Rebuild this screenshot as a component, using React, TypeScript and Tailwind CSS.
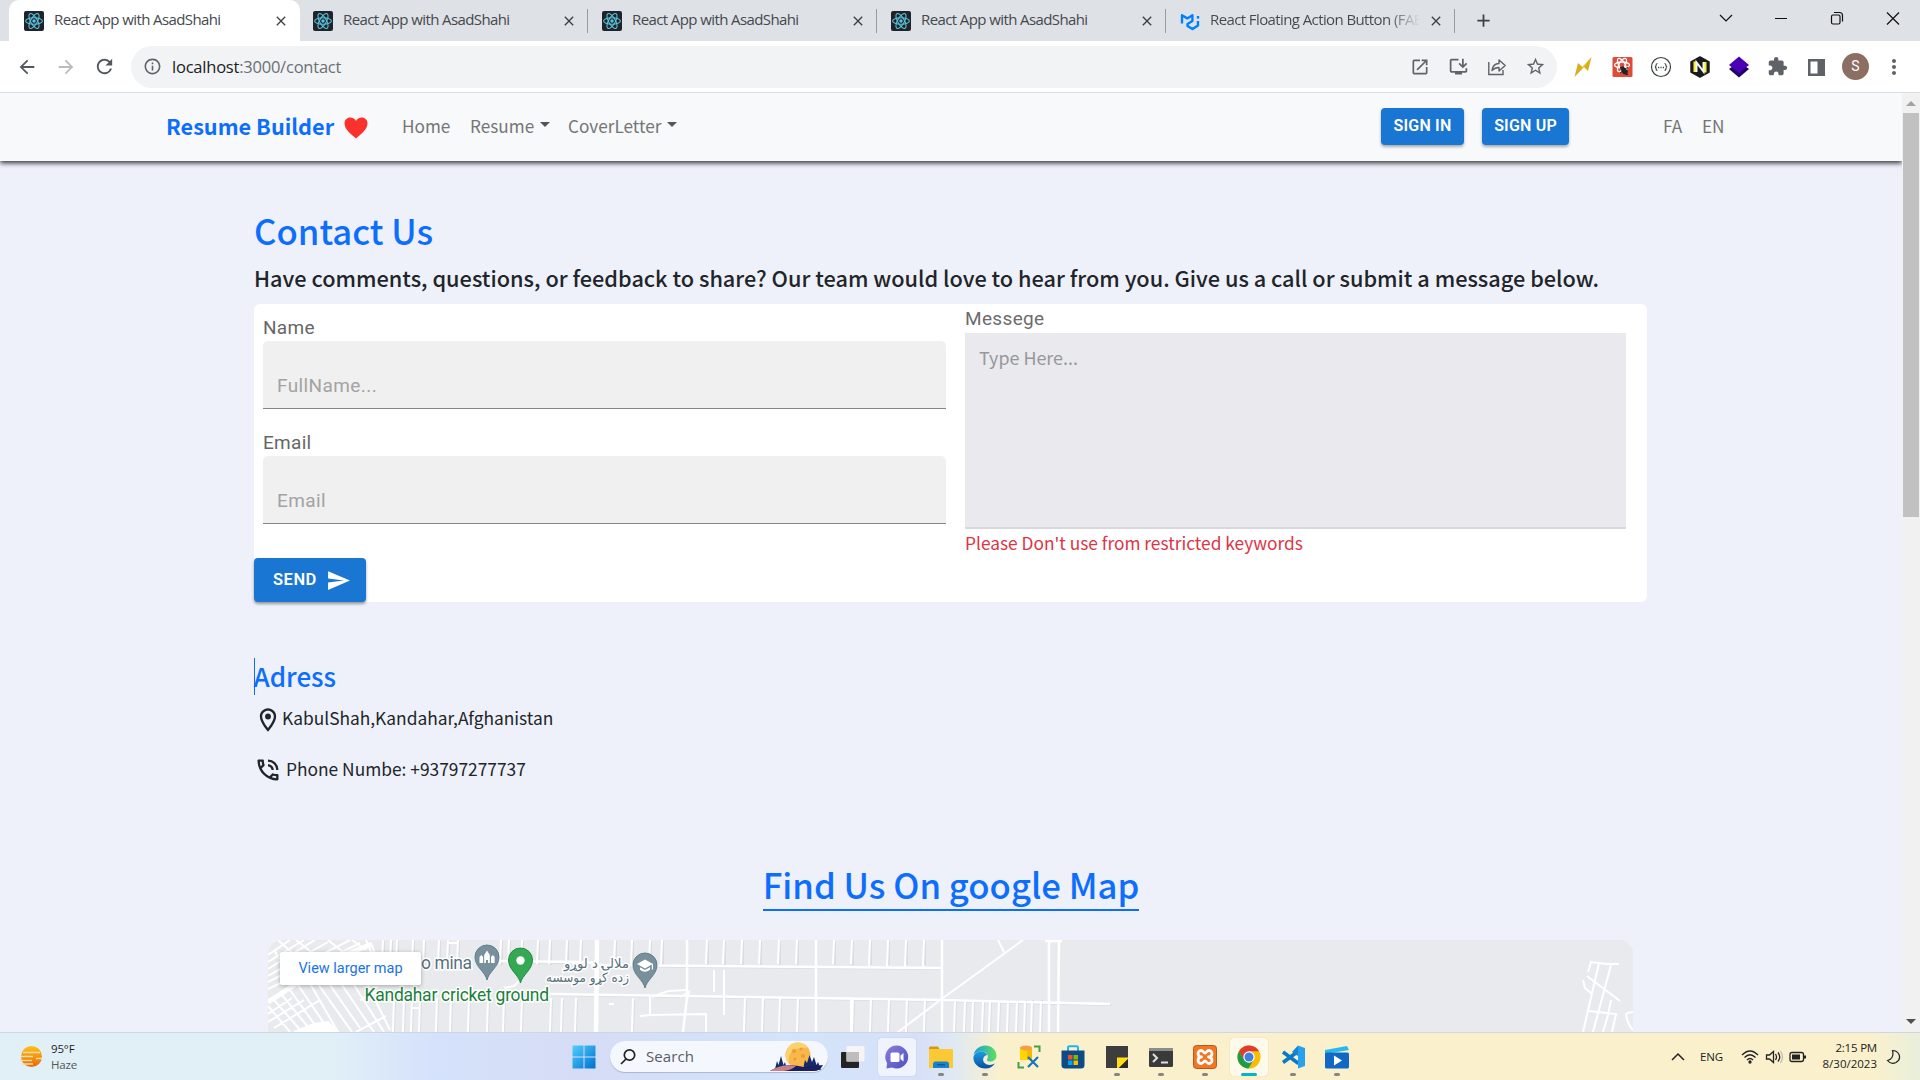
import React from "react";
import {
  MdArrowBack,
  MdArrowForward,
  MdRefresh,
  MdInfoOutline,
  MdOpenInNew,
  MdInstallDesktop,
  MdStarBorder,
  MdExtension,
  MdMoreVert,
  MdClose,
  MdAdd,
  MdSend,
  MdOutlineLocationOn,
  MdOutlinePhoneInTalk,
} from "react-icons/md";

const ui = "font-['Open_Sans','Noto_Sans',sans-serif]";
const page = "font-['Noto_Sans_CJK_SC',sans-serif]";
const roboto = "font-['Roboto',sans-serif]";

function ReactFavicon() {
  return (
    <svg width="20" height="20" viewBox="0 0 20 20" className="shrink-0">
      <rect width="20" height="20" rx="2" fill="#20232a" />
      <g fill="none" stroke="#58c4dc" strokeWidth="1.1">
        <ellipse cx="10" cy="10" rx="8.4" ry="3.3" />
        <ellipse cx="10" cy="10" rx="8.4" ry="3.3" transform="rotate(60 10 10)" />
        <ellipse cx="10" cy="10" rx="8.4" ry="3.3" transform="rotate(120 10 10)" />
      </g>
      <circle cx="10" cy="10" r="1.7" fill="#58c4dc" />
    </svg>
  );
}

function MuiFavicon() {
  return (
    <svg width="20" height="20" viewBox="0 0 20 20" className="shrink-0">
      <g fill="none" strokeWidth="2.4" strokeLinejoin="round">
        <path d="M2 12.5V4.2L7.3 7.4 12.4 4.2V10L7.5 13V15L12.5 18L18 14.5V10" stroke="#007fff" />
        <path d="M18 7.6V5" stroke="#007fff" />
      </g>
    </svg>
  );
}

function Tab({ title, active, mui }: { title: string; active?: boolean; mui?: boolean }) {
  return (
    <div className="flex h-[41px] w-[289px] shrink-0 items-center">
      <div
        className={
          active
            ? "-ml-px flex h-[41px] w-[291px] shrink-0 items-center rounded-t-[10px] bg-white pl-[15px]"
            : "flex h-[41px] w-[289px] items-center pl-[14px]"
        }
      >
        {mui ? <MuiFavicon /> : <ReactFavicon />}
        <div
          className={
            mui
              ? "-mt-[3px] ml-[10px] w-[211px] overflow-hidden whitespace-nowrap bg-linear-to-r from-[#45494d] from-85% to-transparent bg-clip-text text-[15px] leading-5 tracking-[-0.6px] text-transparent"
              : "-mt-[3px] ml-[10px] w-[211px] overflow-hidden whitespace-nowrap text-[15px] leading-5 tracking-[-0.6px] text-[#45494d]"
          }
        >
          {title}
        </div>
        <MdClose className="ml-[8px] size-4 shrink-0 text-[#3c4043]" />
        {!active && <div className="ml-[10px] h-6 w-px shrink-0 bg-[#989ca1]" />}
      </div>
    </div>
  );
}

function TabStrip() {
  return (
    <div className="flex h-[41px] bg-[#dee1e6] pl-[10px]">
      <Tab title="React App with AsadShahi" active />
      <Tab title="React App with AsadShahi" />
      <Tab title="React App with AsadShahi" />
      <Tab title="React App with AsadShahi" />
      <Tab title="React Floating Action Button (FAB)" mui />
      <div className="flex flex-1 items-center pl-[18px]">
        <MdAdd className="size-[21px] text-[#3c4043]" />
      </div>
      <svg width="200" height="36" viewBox="1712 0 200 36" fill="none" stroke="#111" strokeWidth="1.2" className="mr-2">
        <path d="M1720 15l6 6 6-6M1775 18.5h12M1887 12.5l12 12M1899 12.5l-12 12" />
        <rect x="1831.500" y="15" width="8.500" height="9" rx="1.500" />
        <path d="M1834 12.500h5.500a3 3 0 0 1 3 3v6" />
      </svg>
    </div>
  );
}

function ShareIcon() {
  return (
    <svg width="20" height="20" viewBox="0 0 20 20" fill="none" stroke="#5f6368" strokeWidth="1.400">
      <path d="M1.800 5v12.500H16V13" />
      <path d="M5 13.500C5.500 9 8 6.600 12 6.500V3l6.200 5.500L12 14v-3.500C9 10.500 7 11.300 5 13.500z" strokeLinejoin="round" />
    </svg>
  );
}

function Toolbar() {
  return (
    <div className="flex h-[52px] items-center border-b border-[#d9dce0] bg-white">
      <MdArrowBack className="ml-4 size-[22px] text-[#54585d]" />
      <MdArrowForward className="ml-[17px] size-[22px] text-[#babcbe]" />
      <MdRefresh className="ml-[16px] size-[23px] text-[#54585d]" />
      <div className="ml-[15px] flex h-[42px] w-[1426px] items-center rounded-full bg-[#f1f3f4]">
        <MdInfoOutline className="ml-[12px] size-[19px] text-[#5f6368]" />
        <div className="ml-[10px] w-[900px] whitespace-nowrap text-[16.5px] leading-6 tracking-[-0.22px] text-[#6b6f74]">
          <span className="text-[#202124]">localhost</span>:3000/contact
        </div>
        <div className="flex flex-1 items-center justify-end gap-[18px] pr-[11px] text-[#5f6368]">
          <MdOpenInNew className="size-5" />
          <MdInstallDesktop className="size-[21px]" />
          <ShareIcon />
          <MdStarBorder className="size-[21px]" />
        </div>
      </div>
      <div className="ml-[15px] flex items-center gap-[17px]">
        <svg width="22" height="22" viewBox="0 0 22 22">
          <path d="M19.500 1L16 15L12 11L2.500 21L6 7L10.500 11z" fill="#d8ad1e" />
          <path d="M19.500 1L13 9.500L11 12L6 7L10.500 11z" fill="#f2d02c" />
        </svg>
        <svg width="22" height="22" viewBox="0 0 22 22">
          <rect x="1.500" y="1" width="20" height="20" rx="1.500" fill="#dd4b39" />
          <g fill="none" stroke="#fff" strokeWidth="1.300">
            <ellipse cx="11" cy="9" rx="7.500" ry="3" />
            <ellipse cx="11" cy="9" rx="7.500" ry="3" transform="rotate(60 11 9)" />
            <ellipse cx="11" cy="9" rx="7.500" ry="3" transform="rotate(120 11 9)" />
          </g>
          <path d="M9 12l3-2 5 5-1 4-4-1z" fill="#222" />
          <path d="M9 11l8 8M17 11l-8 6" stroke="#222" />
        </svg>
        <svg width="22" height="22" viewBox="0 0 22 22" fill="none" stroke="#3c4043">
          <circle cx="11" cy="11" r="9.500" strokeWidth="1.200" />
          <path d="M7.500 7.500c-1.500 0-1.500 1-1.500 2s-.3 1.500-1.200 1.500c.9 0 1.200.5 1.200 1.500s0 2 1.500 2M14.500 7.500c1.500 0 1.500 1 1.500 2s.3 1.500 1.200 1.500c-.9 0-1.200.5-1.200 1.500s0 2-1.500 2" strokeWidth="1.200" />
          <path d="M8 11.500h6" strokeDasharray="1.200 1.200" strokeWidth="1.300" />
        </svg>
        <svg width="22" height="22" viewBox="0 0 22 22">
          <path d="M11 1l9 5v10l-9 5-9-5V6z" fill="#1b1b1b" stroke="#1b1b1b" strokeWidth="1.500" strokeLinejoin="round" />
          <path d="M6 5.500v10.500M16 6v10.500" stroke="#f7ef2b" strokeWidth="3" />
          <path d="M7.500 16V6.500l7 9V6" fill="none" stroke="#f5f5f5" strokeWidth="2" />
        </svg>
        <svg width="22" height="22" viewBox="0 0 22 22">
          <path d="M1 13l10-7 10 7-10 8.500z" fill="#22006e" />
          <path d="M1 9l10-8.500L21 9l-10 8z" fill="#4b00b5" />
        </svg>
        <MdExtension className="size-[21px] text-[#5f6368]" />
        <svg width="22" height="22" viewBox="0 0 22 22">
          <path d="M3 3h17v17H3z M5.500 5.500v12h7v-12z" fillRule="evenodd" fill="#5f6368" />
        </svg>
        <div className={`-ml-[2px] flex size-[27px] items-center justify-center rounded-full bg-[#8d6e63] text-[14px] text-white ${roboto}`}>S</div>
        <MdMoreVert className="-ml-[4px] size-[24px] text-[#5f6368]" />
      </div>
    </div>
  );
}

function Caret() {
  return <span className="ml-[6px] mb-[3px] inline-block border-x-[5px] border-t-[5px] border-x-transparent border-t-[#555]" />;
}

function Navbar() {
  return (
    <div className="relative z-10 flex h-[68px] items-center bg-[#f8f9fa] pb-[2px] pl-[166px] text-[17.2px] text-[#747576] shadow-[0_2px_5px_#000000d0]">
      <span className="w-[178px] whitespace-nowrap text-[21.7px] font-bold text-[#0d6efd]">Resume Builder</span>
      <svg width="24" height="22" viewBox="0 0 24 22" className="mt-[3px] shrink-0">
        <path d="M12 21.500C8 18 .5 12.500.5 6.500.5 3 3 .5 6.200.5 8.700.5 11 1.800 12 4c1-2.200 3.300-3.500 5.800-3.500C21 .5 23.500 3 23.500 6.500 23.500 12.500 16 18 12 21.500z" fill="#fa312c" />
      </svg>
      <span className="ml-[34px] w-[68px]">Home</span>
      <span className="flex w-[98px] items-center">Resume<Caret /></span>
      <span className="flex w-[813px] items-center">CoverLetter<Caret /></span>
      <button className={`h-[37px] w-[83px] rounded-[4px] bg-[#1976d2] text-[16px] font-semibold tracking-[0.2px] text-white shadow-[0_2px_3px_#00000050] ${roboto}`}>SIGN IN</button>
      <button className={`ml-[18px] h-[37px] w-[87px] rounded-[4px] bg-[#1976d2] text-[16px] font-semibold tracking-[0.2px] text-white shadow-[0_2px_3px_#00000050] ${roboto}`}>SIGN UP</button>
      <span className="ml-[94px] w-[39px]">FA</span>
      <span>EN</span>
    </div>
  );
}

function Field({ label, placeholder }: { label: string; placeholder: string }) {
  return (
    <div className={`h-[115px] ${roboto}`}>
      <div className="h-[25px] text-[19px] leading-[23px] tracking-[0.3px] text-[#666]">{label}</div>
      <div className="h-[68px] rounded-t-[5px] border-b border-[#868686] bg-[#f0f0f0] pl-[14px] pt-[31px] text-[19px] leading-[27px] tracking-[0.4px] text-[#a3a3a3]">
        {placeholder}
      </div>
    </div>
  );
}

function ContactForm() {
  return (
    <div className="flex h-[298px] w-[1393px] rounded-[6px] bg-white">
      <div className="w-[711px]">
        <div className="ml-[9px] h-[254px] w-[683px] pt-[12px]">
          <Field label="Name" placeholder="FullName..." />
          <Field label="Email" placeholder="Email" />
        </div>
        <button className={`flex h-[44px] w-[112px] items-center rounded-[4px] bg-[#1976d2] pl-[19px] text-[16.500px] font-semibold tracking-[0.5px] text-white shadow-[0_2px_3px_#00000060] ${roboto}`}>
          SEND
          <MdSend className="ml-[9px] size-[25px]" />
        </button>
      </div>
      <div className="w-[661px]">
        <div className={`h-[29px] text-[19px] leading-[29px] tracking-[0.35px] text-[#6c6c6c] ${roboto}`}>Messege</div>
        <div className="h-[196px] border-b-2 border-[#d8d7de] bg-[#eae9ee] pl-[14px] pt-[11px] text-[17.900px] leading-[27px] text-[#97979b]">
          Type Here...
        </div>
        <div className="text-[17.320px] leading-[28px] text-[#dc3545]">Please Don't use from restricted keywords</div>
      </div>
    </div>
  );
}

const upperStreets = [115, 123, 129, 145, 156, 171, 180, 190, 233, 241, 254, 270, 282, 299, 313, 347, 364, 382, 394, 439, 456, 474, 492, 511, 529, 566, 584, 602, 620, 638, 656];
const lowerStreets = [125, 135, 143, 151, 168, 182, 200, 219, 235, 253, 282, 293, 307, 364, 476, 494, 511, 529, 584, 602, 620, 638, 656, 686, 696, 704, 714, 721, 730, 739, 748, 756, 763, 772];

function Pin({ x, y, fill, stroke, kind }: { x: number; y: number; fill: string; stroke: string; kind: string }) {
  return (
    <g transform={`translate(${x} ${y})`}>
      <path d="M0 35C-1.500 27-12 22-12 12A12 12 0 0 1 12 12C12 22 1.500 27 0 35z" fill={fill} stroke={stroke} />
      {kind === "dot" && <circle cx="0" cy="12.500" r="4.200" fill="#fff" />}
      {kind === "mosque" && <path d="M-7.500 18v-6l1.800-2 1.800 2v6zM-2.800 18v-8L0 5.500 2.800 10v8H1v-3h-2v3zM4 18v-6l1.800-2 1.800 2v6z" fill="#fff" />}
      {kind === "school" && <path d="M-8 11L0 6.500 8 11v5.500H6.800v-5L0 15.500zM-5 14.200L0 17l5-2.800v2.500Q0 21-5 16.700z" fill="#fff" />}
    </g>
  );
}

function MapView() {
  return (
    <div className="relative ml-[268px] h-[140px] w-[1365px] overflow-hidden rounded-t-[14px] bg-[#e8eaed]">
      <svg width="1365" height="92" viewBox="0 0 1365 92" className="block">
        <g transform="translate(1 1)" fill="none" stroke="#dadce0" strokeWidth="2">
          {upperStreets.map((x) => <path key={x} d={`M${x} 0V24`} />)}
          {lowerStreets.map((x) => <path key={x} d={`M${x + 1} 59L${x} 92`} />)}
          <path d="M225 21L320 22L328 25L674 28M282 54L674 60L775 62.500L842 64" />
        </g>
        <g fill="none" stroke="#fff" strokeWidth="2">
          {upperStreets.map((x) => <path key={x} d={`M${x} 0L${x - 1} ${x > 600 ? 27 : 24}`} />)}
          {lowerStreets.map((x) => <path key={x} d={`M${x + 1} ${x > 680 ? 62 : 58}L${x} 92`} />)}
          <path d="M225 21L320 22L328 25L674 28M282 54L674 60L775 62.500L842 64M419 0V57L415 92M548 0V92M674 0V92M781 0V92M791 0L790 92M777 1h17" strokeWidth="2.500" />
          <path d="M755 0L675 58L630 92M730 0L736 12M372 76L382 75V57M382 75L438 74V92M412 57L421 52L419 60M446 30V52M456 75V30M341 64h5M384 57L400 51L419 50M583 60V92" />
          <path d="M329 0L328 92" strokeWidth="4.500" />
          <path d="M1320 32L1323 22L1339 24L1351 24M1331 23L1315 92M1343 25L1325 92M1319 36L1352 61M1315 40L1317 48L1324 54M1321 71L1348 74L1344 92M1343 60L1340 75L1335 92M1359 73L1365 72M1358 73Q1359 84 1365 90" />
        </g>
        <g fill="none" stroke="#fff" strokeWidth="2">
          <path d="M0 62L28 44L60 22L104 4" strokeWidth="5" />
          <path d="M0 15L22 0M0 22L36 0M0 29L47 0M0 36L60 2M0 42L82 0M0 49L92 3M10 0L40 27M28 0L56 22M60 0L80 16M6 10L22 36M98 0L104 14L86 20M84 0L98 10M104 5L110 24" />
          <path d="M0 66L22 92M6 60L34 92M14 55L44 92M22 50L52 92M30 45L62 92M40 40L70 92M50 44L84 92M62 45L92 88M74 45L106 92M86 45L116 92M100 45L122 90M0 74L24 58M0 82L36 60M6 88L52 60M88 92L118 76M92 60L108 52" />
          <path d="M26 92L46 84L60 82L70 92z" fill="#fff" />
          <path d="M143 68h9M180 3h9M236 48L246 46L252 40" />
        </g>
        <Pin x={219} y={5} fill="#78909c" stroke="#607d8b" kind="mosque" />
        <Pin x={252.500} y={8} fill="#34a853" stroke="#1e8e3e" kind="dot" />
        <Pin x={377} y={13} fill="#78909c" stroke="#607d8b" kind="school" />
        <g fontFamily="Roboto" stroke="#fff" strokeWidth="3" style={{ paintOrder: "stroke" }}>
          <text x="153" y="28.500" fontSize="17.500" textLength="51" fill="#58707c">o mina</text>
          <text x="96.500" y="61" fontSize="17.500" textLength="184.500" fill="#188038">Kandahar cricket ground</text>
          <g fontFamily="'DejaVu Sans', sans-serif" fontSize="13" fill="#58707c" direction="rtl">
            <text x="361" y="28" textLength="65" lengthAdjust="spacingAndGlyphs">ملالۍ د لوړو</text>
            <text x="361" y="42" textLength="83" lengthAdjust="spacingAndGlyphs">زده کړو موسسه</text>
          </g>
        </g>
      </svg>
      <div className={`absolute left-[12px] top-[12px] flex h-[33px] w-[141px] items-center justify-center rounded-[2px] bg-white text-[14.500px] text-[#1a73e8] shadow-[0_1px_4px_#0000004d] ${roboto}`}>
        View larger map
      </div>
    </div>
  );
}

function ContactPage() {
  return (
    <div className={`h-[939px] w-[1902px] overflow-hidden bg-[#eef1fa] ${page}`}>
      <Navbar />
      <div className="pl-[254px]">
        <h1 className="mt-[44px] h-[52px] whitespace-nowrap text-[34.700px] font-medium leading-[51px] text-[#0d6efd]">Contact Us</h1>
        <h2 className="h-[47px] whitespace-nowrap pt-[3px] text-[21.730px] font-medium leading-[36px] text-[#212529]">
          Have comments, questions, or feedback to share? Our team would love to hear from you. Give us a call or submit a message below.
        </h2>
        <ContactForm />
        <h3 className="mt-[56px] flex h-[37px] w-[90px] items-center border-l border-[#0d6efd] pb-[2px] text-[26px] font-medium leading-[35px] text-[#0d6efd]">
          <span className="-ml-[1.500px]">Adress</span>
        </h3>
        <div className="mt-[11px] flex h-[28px] items-center whitespace-nowrap text-[17.350px] text-[#212529]">
          <MdOutlineLocationOn className="size-[28px] shrink-0" />
          <span className="-mt-[4px]">KabulShah,Kandahar,Afghanistan</span>
        </div>
        <div className="mt-[22px] flex h-[28px] items-center whitespace-nowrap text-[17.350px] text-[#212529]">
          <MdOutlinePhoneInTalk className="size-[28px] shrink-0" />
          <span className="-mt-[2px] ml-[4px]">Phone Numbe: +93797277737</span>
        </div>
      </div>
      <div className="mt-[74px] flex h-[55px] justify-center">
        <h2 className="h-[53px] whitespace-nowrap border-b-2 border-[#0d6efd] text-[34.700px] font-medium leading-[53px] text-[#0d6efd]">Find Us On google Map</h2>
      </div>
      <div className="mt-[27px]">
        <MapView />
      </div>
    </div>
  );
}

function Scrollbar() {
  return (
    <div className="flex h-[939px] w-[18px] flex-col items-center justify-between bg-[#f1f1f1]">
      <div className="flex flex-col items-center">
        <div className="mt-[8px] border-x-[5px] border-b-[5px] border-x-transparent border-b-[#a3a3a3]" />
        <div className="mt-[7px] h-[404px] w-[16px] bg-[#c1c1c1]" />
      </div>
      <div className="mb-[8px] border-x-[5px] border-t-[5px] border-x-transparent border-t-[#505050]" />
    </div>
  );
}

function TaskbarApp({ children, dot, active }: { children: React.ReactNode; dot?: string; active?: boolean }) {
  return (
    <div className="flex h-[48px] w-[44px] shrink-0 items-start justify-center pt-[5px]">
      <div className={active ? "flex h-[38px] w-[38px] flex-col items-center rounded-[4px] bg-[#ffffff99] pt-[7px] shadow-[0_0_1px_#00000040]" : "flex h-[38px] w-[38px] flex-col items-center pt-[7px]"}>
        <svg width="24" height="24" viewBox="0 0 24 24" className="shrink-0">{children}</svg>
        {dot === "gray" && <div className="mt-[4px] h-[3px] w-[6px] shrink-0 rounded-full bg-[#87857c]" />}
        {dot === "teal" && <div className="mt-[4px] h-[3px] w-[16px] shrink-0 rounded-full bg-[#00b7c3]" />}
      </div>
    </div>
  );
}

function Taskbar() {
  return (
    <div className={`flex h-[48px] items-center border-t border-[#cdd6e6] bg-[linear-gradient(90deg,#e1f0f7_0,#e1f0f7_330px,#d5e2fb_430px,#d6dcf6_580px,#d2e4fb_800px,#d8e0f8_920px,#dfe9f2_955px,#faf1cc_1000px,#faf1cc_1870px,#e9efdc_1920px)] text-[#222] ${ui}`}>
      <svg width="24" height="24" viewBox="0 0 24 24" className="ml-[19px] shrink-0">
        <defs>
          <linearGradient id="sun" x2="0" y2="1"><stop stopColor="#fcc21b" /><stop offset="1" stopColor="#e8690b" /></linearGradient>
        </defs>
        <circle cx="12.500" cy="11.500" r="10.500" fill="url(#sun)" />
        <path d="M4 7.500h17M2 11.500h12M1 15.500h12M17 13.500h6M3 19h11" stroke="#f7dba0" strokeWidth="1.500" />
      </svg>
      <div className="ml-[8px] w-[521px] text-[11.500px] leading-[16px] tracking-[-0.15px]">
        <div>95°F</div>
        <div className="text-[#555]">Haze</div>
      </div>
      <svg width="24" height="24" viewBox="0 0 24 24" className="shrink-0">
        <defs>
          <linearGradient id="win" x2="1" y2="1"><stop stopColor="#4fd0fb" /><stop offset="1" stopColor="#006fd0" /></linearGradient>
        </defs>
        <path d="M.5.500h11v11H.5zM12.500.500h11v11h-11zM.5 12.500h11v11H.5zM12.500 12.500h11v11h-11z" fill="url(#win)" />
      </svg>
      <div className="ml-[14px] flex h-[31px] w-[218px] shrink-0 items-center overflow-hidden rounded-full bg-[#f4f7fe] shadow-[0_1px_1px_#00000030]">
        <svg width="18" height="18" viewBox="0 0 18 18" className="ml-[9px]" fill="none" stroke="#222" strokeWidth="1.700">
          <circle cx="10.500" cy="7" r="5.200" /><path d="M7 11L2 16" />
        </svg>
        <span className="ml-[9px] w-[124px] text-[15px] tracking-[0.1px] text-[#5b5d61]">Search</span>
        <svg width="54" height="31" viewBox="0 0 54 31">
          <circle cx="28" cy="14" r="12.500" fill="#f9b94a" />
          <path d="M28 1.500a12.500 12.500 0 0 0-9 21C17 10 25 6 38 7A12.500 12.500 0 0 0 28 1.500z" fill="#fbd36c" />
          <g fill="#e99a3a"><circle cx="24" cy="10" r="2" /><circle cx="31" cy="8" r="1.500" /><circle cx="33" cy="15" r="2" /><circle cx="25" cy="18" r="1.500" /></g>
          <path d="M5 28l2-8 1.500 4 2.500-9 2.500 9 1.500-3 2 8zM33 28l2-9 2 3 2.500-8 2.500 7 2-5 2.500 8 1.500-3 3 8z" fill="#152a6b" />
          <path d="M0 30Q14 21 34 26L53 24Q50 30 44 30z" fill="#1b1f5a" />
          <path d="M0 30Q12 22 26 25Q22 29 14 30z" fill="#c97f86" />
        </svg>
      </div>
      <div className="ml-[3px] flex shrink-0">
        <TaskbarApp>
          <rect x="0" y="7" width="18" height="16" rx="1" fill="#232323" /><rect x="5.500" y="1" width="18" height="15.500" rx="1" fill="#f5f5f5" /><rect x="5.500" y="7" width="12.500" height="9.500" fill="#bdbdbd" />
        </TaskbarApp>
        <TaskbarApp active>
          <defs><linearGradient id="chat" x2="1" y2="1"><stop stopColor="#8d7bdc" /><stop offset="1" stopColor="#4a52c2" /></linearGradient></defs>
          <path d="M12 .5A11.500 11.500 0 1 1 7 22.500L1.500 23.500 2 18A11.500 11.500 0 0 1 12 .5z" fill="url(#chat)" /><rect x="5.500" y="7.500" width="9" height="9.500" rx="1.500" fill="#fff" /><path d="M15.500 10.500l3-2.500v8.500l-3-2.500z" fill="#fff" />
        </TaskbarApp>
        <TaskbarApp dot="gray">
          <path d="M0 3q0-1.500 1.500-1.500H9l2 3.500H0z" fill="#d9960f" /><rect y="4" width="24" height="19" rx="1" fill="#fcc935" /><path d="M4 23v-4q0-2.500 2.500-2.500h11q2.500 0 2.500 2.500v4z" fill="#1783cf" /><rect x="8" y="19" width="8" height="1.500" fill="#0c5a9e" />
        </TaskbarApp>
        <TaskbarApp dot="gray">
          <defs>
            <linearGradient id="e1" x2="1"><stop stopColor="#1b9de2" /><stop offset="1" stopColor="#5fe05a" /></linearGradient>
            <linearGradient id="e2" x2="0" y2="1"><stop stopColor="#1b9de2" /><stop offset="1" stopColor="#0b4fa0" /></linearGradient>
          </defs>
          <path d="M.5 10C2 4 7 .5 12 .5c7 0 11.500 5 11.500 10 0 4-3 6-6.500 6-3 0-3.500-1.500-2.500-3C16 10 13 6.500 9 6.500 5 6.500 2 8 .5 10z" fill="url(#e1)" />
          <path d="M.4 13C.5 9 4 6.500 8.500 6.500c3 0 5.500 2 5.500 3.500-4 1-5 5-2.500 8 2.500 2.500 7 2.500 10.500.5-2 3-5.500 5-9.500 5C5.500 23.500.4 18.500.4 13z" fill="url(#e2)" />
        </TaskbarApp>
        <TaskbarApp>
          <rect x="3" y="2" width="12" height="13" fill="#ffd400" /><path d="M10 3h5v12h-5z" fill="#f7b900" /><ellipse cx="9" cy="3" rx="6" ry="2.500" fill="#f0a04b" /><path d="M17 1.500h5.500V7M1.500 17v5.500H7" fill="none" stroke="#43a047" strokeWidth="2" /><path d="M11 12l10 10M21 12L11 22" stroke="#1976b8" strokeWidth="2.200" />
        </TaskbarApp>
        <TaskbarApp>
          <path d="M7 6V2.500Q7 1.200 8.300 1.200h7.400Q17 1.200 17 2.500V6" fill="none" stroke="#22b4ee" strokeWidth="2" /><path d="M.5 5.500h23V20q0 3.500-3.500 3.500H4Q.5 23.500.5 20z" fill="#0d4a86" /><path d="M7 10h4.500v4.500H7z" fill="#f25022" /><path d="M12.500 10H17v4.500h-4.500z" fill="#7fba00" /><path d="M7 15.500h4.500V20H7z" fill="#00a4ef" /><path d="M12.500 15.500H17V20h-4.500z" fill="#ffb900" />
        </TaskbarApp>
        <TaskbarApp dot="gray">
          <path d="M1 1h22v22H1z" fill="#3d3d3d" /><path d="M12 12.500h11V14L14 23h-2z" fill="#ffde17" /><path d="M23 14v9h-9z" fill="#2b2b2b" />
        </TaskbarApp>
        <TaskbarApp dot="gray">
          <rect y="3" width="24" height="19" rx="1.500" fill="#3a3a3a" /><path d="M0 6V4.500Q0 3 1.500 3h21Q24 3 24 4.500V6z" fill="#8c8c8c" /><path d="M4 9l4 4-4 4M12 17.500h7" fill="none" stroke="#e0e0e0" strokeWidth="2" />
        </TaskbarApp>
        <TaskbarApp dot="gray">
          <rect x=".5" y=".500" width="23" height="23" rx="3" fill="#f37623" stroke="#b5591c" />
          <path d="M8.500 12C4 12 4 5.500 8 5.500c2.500 0 2.500 2.500 4 2.500s1.500-2.500 4-2.500c4 0 4 6.500-.5 6.500 4.500 0 4.500 6.500.5 6.500-2.500 0-2.500-2.500-4-2.500s-1.500 2.500-4 2.500c-4 0-4-6.500.5-6.500z" fill="none" stroke="#fff" strokeWidth="2.800" strokeLinejoin="round" />
        </TaskbarApp>
        <TaskbarApp dot="teal" active>
          <circle cx="12" cy="12" r="11.500" fill="#fbbc04" /><path d="M2 6.200A11.500 11.500 0 0 1 22 6.300H12L7 15z" fill="#e33b2e" /><path d="M2 6.200L7.200 15 12 17.500 16.500 15 11.500 23.500A11.500 11.500 0 0 1 2 6.200z" fill="#1e9a4a" /><circle cx="12" cy="12" r="5.700" fill="#fff" /><circle cx="12" cy="12" r="4.500" fill="#3f7fe8" />
        </TaskbarApp>
        <TaskbarApp dot="gray">
          <path d="M17.500 6L2 17.500M2 7l15.500 11.500" stroke="#0a7ac4" strokeWidth="3.600" /><path d="M17 .500L24 3v18l-7 2.500z" fill="#27a0ee" /><path d="M17 .500L11 7l6 4z" fill="#1587d2" />
        </TaskbarApp>
        <TaskbarApp dot="gray">
          <path d="M0 5L22 1l2 4-24 4z" fill="#27b8ee" /><rect y="7.500" width="24" height="16" rx="1.500" fill="#1067c4" /><path d="M9 10.500v10l8-5z" fill="#fff" />
        </TaskbarApp>
      </div>
      <div className="flex flex-1 items-center justify-end pr-[19px]">
        <svg width="14" height="10" viewBox="0 0 14 10" fill="none" stroke="#222" strokeWidth="1.500"><path d="M1 8l6-6 6 6" /></svg>
        <span className="ml-[15px] w-[41px] text-[11.500px] tracking-[-0.1px]">ENG</span>
        <svg width="66" height="18" viewBox="0 0 66 18" fill="none" stroke="#222" strokeWidth="1.300">
          <path d="M1 7Q9-1 17 7M3.500 9.500Q9 4 14.500 9.500M6 12Q9 9 12 12" /><circle cx="9" cy="14" r="1" fill="#222" />
          <path d="M25.500 7v4h3l4 3.500v-11L28.500 7zM34.500 6q2 3 0 6M37 4.500q3.500 4.500 0 9" /><path d="M39.500 3q4 6 0 12" stroke="#bbb" />
          <rect x="49" y="4.500" width="13.500" height="9" rx="2" /><rect x="51" y="6.500" width="8" height="5" fill="#222" stroke="none" /><path d="M64 7.500v3" strokeWidth="2" />
        </svg>
        <div className="-mt-[2px] ml-[8px] w-[62px] whitespace-nowrap text-right text-[11.500px] leading-[16px]">
          <div className="tracking-[-0.2px]">2:15 PM</div>
          <div>8/30/2023</div>
        </div>
        <svg width="15" height="16" viewBox="0 0 15 16" fill="none" stroke="#222" strokeWidth="1.200" className="ml-[9px]">
          <path d="M6.500 1.500Q8.500 9.500 1.500 11.500Q5 16 10 13.500Q15 10.500 13 5.500Q11 1.500 6.500 1.500z" />
        </svg>
      </div>
    </div>
  );
}

export default function App() {
  return (
    <div className={`h-[1080px] w-[1920px] overflow-hidden bg-white ${ui}`}>
      <TabStrip />
      <Toolbar />
      <div className="flex">
        <ContactPage />
        <Scrollbar />
      </div>
      <Taskbar />
    </div>
  );
}
